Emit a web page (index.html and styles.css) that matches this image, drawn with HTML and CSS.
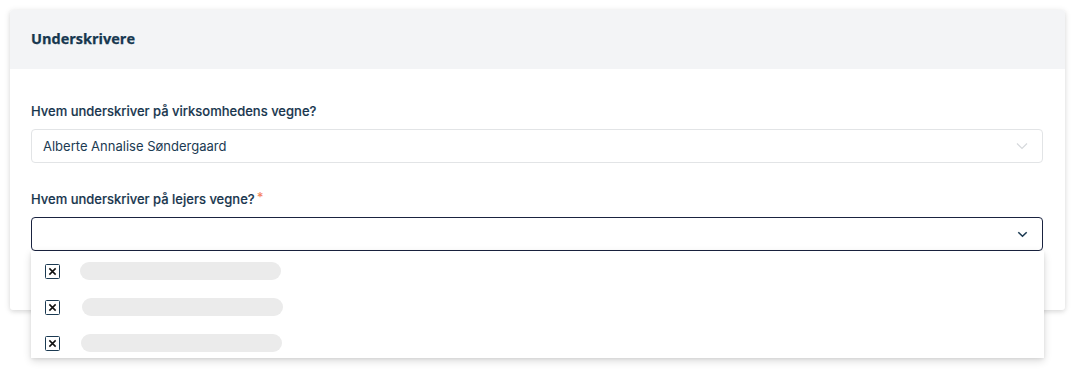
FILE: index.html
```html
<!DOCTYPE html>
<html lang="da">
<head>
<meta charset="utf-8">
<title>Underskrivere</title>
<link rel="stylesheet" href="styles.css">
</head>
<body>
<section class="card">
  <header class="card-header">
    <h2 class="card-title">Underskrivere</h2>
  </header>
  <div class="card-body">
    <div class="field">
      <label class="label">Hvem underskriver på virksomhedens vegne?</label>
      <div class="select select-disabled">
        <span class="select-value">Alberte Annalise Søndergaard</span>
        <svg class="chev" viewBox="0 0 12 8" width="12" height="8"><path d="M1 1.5 L6 6.5 L11 1.5" fill="none" stroke="#d6d9dc" stroke-width="1.2"/></svg>
      </div>
    </div>
    <div class="field field-2">
      <label class="label">Hvem underskriver på lejers vegne?<span class="req">*</span></label>
      <div class="select-wrap">
        <div class="select select-open">
          <span class="select-value"></span>
          <svg class="chev" viewBox="0 0 12 8" width="11" height="7"><path d="M1.2 1.4 L6 6 L10.8 1.4" fill="none" stroke="#1b3a52" stroke-width="1.8"/></svg>
        </div>
        <ul class="menu">
          <li class="menu-row"><span class="cb"><svg viewBox="0 0 10 10" width="9" height="9"><path d="M1.5 1.5 L8.5 8.5 M8.5 1.5 L1.5 8.5" stroke="#111" stroke-width="1.7" fill="none"/></svg></span><span class="skel" style="margin-left:20px"></span></li>
          <li class="menu-row"><span class="cb"><svg viewBox="0 0 10 10" width="9" height="9"><path d="M1.5 1.5 L8.5 8.5 M8.5 1.5 L1.5 8.5" stroke="#111" stroke-width="1.7" fill="none"/></svg></span><span class="skel" style="margin-left:22px"></span></li>
          <li class="menu-row"><span class="cb"><svg viewBox="0 0 10 10" width="9" height="9"><path d="M1.5 1.5 L8.5 8.5 M8.5 1.5 L1.5 8.5" stroke="#111" stroke-width="1.7" fill="none"/></svg></span><span class="skel" style="margin-left:21px"></span></li>
        </ul>
      </div>
    </div>
  </div>
</section>
</body>
</html>
```
FILE: styles.css
```css
* { box-sizing: border-box; }
html, body { margin: 0; padding: 0; background: #ffffff; }
html { min-height: 371px; }
body {
  min-height: 371px;
  padding: 10px 11px 0 10px;
  font-family: Inter, "Noto Sans", Arial, sans-serif;
  color: #1b3a52;
}
.card {
  width: 1055px;
  height: 300px;
  background: #fff;
  border-radius: 3px;
  box-shadow: 0 1px 6px rgba(0,0,0,0.12), 0 2px 4px rgba(0,0,0,0.06);
}
.card-header {
  height: 59px;
  background: #f3f4f6;
  border-radius: 3px 3px 0 0;
  display: flex;
  align-items: center;
  padding: 0 21px 2px;
}
.card-title {
  margin: 0;
  font-family: "Open Sans", "Noto Sans", sans-serif;
  font-weight: 700;
  font-size: 14.5px;
  color: #163750;
  -webkit-text-stroke: 0.25px #163750;
}
.card-body {
  padding: 33px 22px 0 21px;
}
.field { display: flex; flex-direction: column; }
.field-2 { margin-top: 27px; }
.label {
  font-size: 13px;
  line-height: 18px;
  font-weight: 500;
  color: #18364e;
  margin-bottom: 9px;
  -webkit-text-stroke: 0.15px #18364e;
}
.req {
  color: #f4845f;
  margin-left: 2px;
  -webkit-text-stroke: 0;
  position: relative;
  top: -2px;
}
.select {
  height: 34px;
  border: 1px solid #e2e4e6;
  border-radius: 4px;
  display: flex;
  align-items: center;
  justify-content: space-between;
  padding: 0 14px 0 11px;
  background: #fff;
}
.select-value { font-size: 13px; color: #1b3a52; }
.select-open { border-color: #1a2340; }
.select-wrap { position: relative; }
.menu {
  position: absolute;
  left: 0;
  right: -1px;
  top: 34px;
  margin: 0;
  padding: 2px 0 0;
  list-style: none;
  background: #fff;
  height: 107px;
  overflow: hidden;
  box-shadow: 0 3px 8px rgba(0,0,0,0.14), 0 1px 3px rgba(0,0,0,0.08);
  z-index: 2;
}
.menu-row {
  height: 36px;
  display: flex;
  align-items: center;
  padding-left: 14px;
}
.cb {
  width: 15px;
  height: 15px;
  border: 1.5px solid #1b3a52;
  border-radius: 1.5px;
  display: flex;
  align-items: center;
  justify-content: center;
}
.cb svg { display: block; }
.skel {
  width: 201px;
  height: 18px;
  border-radius: 9px;
  background: #ebebeb;
}
```
